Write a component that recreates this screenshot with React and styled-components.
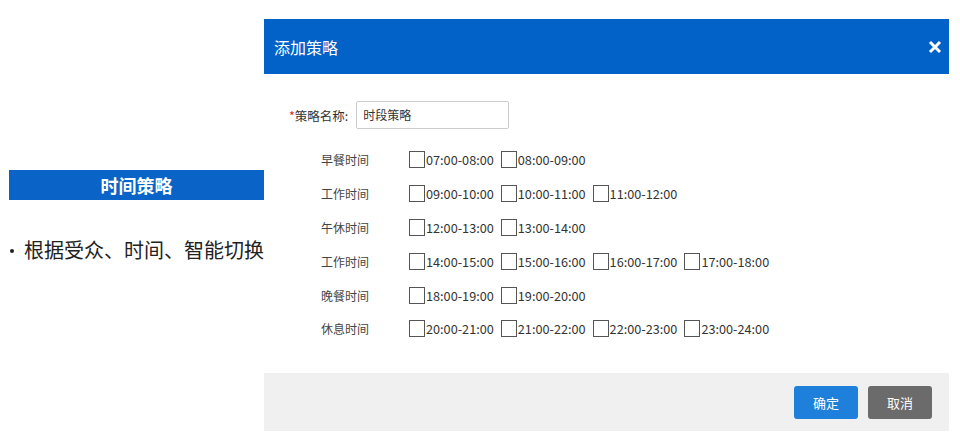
import styled, { createGlobalStyle } from 'styled-components'

const GlobalStyle = createGlobalStyle`
  body {
    margin: 0;
    background: #fff;
    font-family: "Noto Sans CJK SC", "Noto Sans", sans-serif;
  }
`

const groups = [
  { name: '早餐时间', slots: ['07:00-08:00', '08:00-09:00'] },
  { name: '工作时间', slots: ['09:00-10:00', '10:00-11:00', '11:00-12:00'] },
  { name: '午休时间', slots: ['12:00-13:00', '13:00-14:00'] },
  { name: '工作时间', slots: ['14:00-15:00', '15:00-16:00', '16:00-17:00', '17:00-18:00'] },
  { name: '晚餐时间', slots: ['18:00-19:00', '19:00-20:00'] },
  { name: '休息时间', slots: ['20:00-21:00', '21:00-22:00', '22:00-23:00', '23:00-24:00'] },
]

function App() {
  return (
    <Page>
      <GlobalStyle />
      {/* 左侧说明 */}
      <Side>
        <SideBar>时间策略</SideBar>
        <Bullet>
          <Dot />根据受众、时间、智能切换
        </Bullet>
      </Side>

      {/* 弹窗 */}
      <Dialog>
        <Header>
          <span>添加策略</span>
          <Close viewBox="0 0 14 14">
            <path d="M2 2 L12 12 M12 2 L2 12" />
          </Close>
        </Header>
        <Body>
          <NameRow>
            <NameLabel><Star>*</Star>策略名称:</NameLabel>
            <NameInput>时段策略</NameInput>
          </NameRow>
          <Rows>
            {groups.map((g, i) => (
              <Row key={i}>
                <RowLabel>{g.name}</RowLabel>
                <Slots>
                  {g.slots.map((s) => (
                    <Slot key={s}>
                      <Box />
                      {s}
                    </Slot>
                  ))}
                </Slots>
              </Row>
            ))}
          </Rows>
        </Body>
        <Footer>
          <Button $kind="ok">确定</Button>
          <Button $kind="cancel">取消</Button>
        </Footer>
      </Dialog>
    </Page>
  )
}

// styled components
const Page = styled.div`
  display: flex;
  align-items: flex-start;
  width: 960px;
  height: 443px;
  overflow: hidden;
`

const Side = styled.div`
  width: 255px;
  padding: 170px 0 0 9px;
`

const SideBar = styled.div`
  height: 30px;
  background: #0a64c8;
  color: #fff;
  font-size: 18px;
  font-weight: 700;
  line-height: 30px;
  text-align: center;
`

const Bullet = styled.div`
  margin-top: 37px;
  font-size: 20px;
  line-height: 26px;
  color: #222;
  white-space: nowrap;
  display: flex;
  align-items: center;
`

const Dot = styled.span`
  width: 4px;
  height: 4px;
  border-radius: 50%;
  background: #222;
  margin: 2px 10px 0 1px;
`

const Dialog = styled.div`
  margin-top: 19px;
  width: 685px;
  background: #fff;
`

const Header = styled.div`
  height: 55px;
  background: #0262c8;
  color: #fff;
  font-size: 16px;
  display: flex;
  align-items: center;
  justify-content: space-between;
  padding: 0 7px 0 10px;
`

const Close = styled.svg`
  width: 14px;
  height: 14px;
  & path {
    stroke: #fff;
    stroke-width: 3;
    fill: none;
  }
`

const Body = styled.div`
  height: 299px;
  padding-top: 27px;
  box-sizing: border-box;
`

const NameRow = styled.div`
  display: flex;
  align-items: center;
  padding-left: 25px;
  gap: 8px;
`

const NameLabel = styled.span`
  font-size: 12.5px;
  color: #333;
`

const Star = styled.span`
  color: #e02020;
`

const NameInput = styled.div`
  width: 153px;
  height: 28px;
  box-sizing: border-box;
  border: 1px solid #ccc;
  border-radius: 2px;
  padding-left: 6px;
  font-size: 12px;
  line-height: 26px;
  color: #333;
`

const Rows = styled.div`
  margin-top: 14px;
`

const Row = styled.div`
  display: flex;
  align-items: center;
  height: 33.8px;
`

const RowLabel = styled.span`
  width: 88px;
  padding-left: 57px;
  font-size: 12px;
  color: #444;
`

const Slots = styled.div`
  display: flex;
  gap: 7px;
`

const Slot = styled.span`
  display: flex;
  align-items: center;
  font-size: 12.7px;
  color: #333;
`

const Box = styled.span`
  width: 16px;
  height: 17px;
  box-sizing: border-box;
  border: 1px solid #555;
  background: #fff;
  margin-right: 1px;
`

const Footer = styled.div`
  height: 58px;
  background: #f0f0f1;
  display: flex;
  align-items: center;
  justify-content: flex-end;
  gap: 10px;
  padding-right: 17px;
`

const Button = styled.div`
  width: 64px;
  height: 33px;
  border-radius: 3px;
  background: ${(p) => (p.$kind === 'ok' ? '#1f80dc' : '#6b6b6b')};
  color: #fff;
  font-size: 13px;
  line-height: 33px;
  text-align: center;
`

export default App
